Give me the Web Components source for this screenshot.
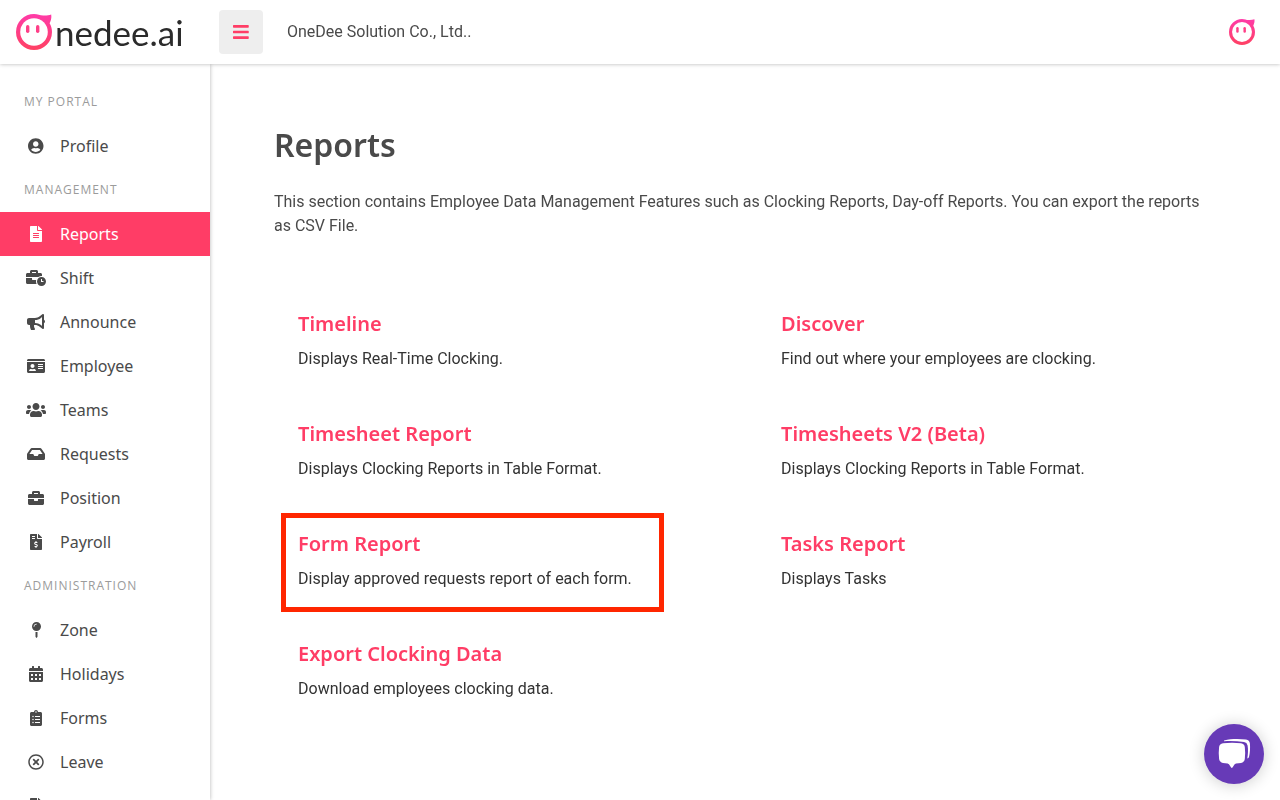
<!DOCTYPE html>
<html lang="en">
<head>
<meta charset="utf-8">
<meta name="viewport" content="width=device-width, initial-scale=1">
<title>Reports - Onedee.ai</title>
<style>
  html, body { margin: 0; height: 100%; background: #fff; }
  body {
    --pink: #ff3d66;
    --ink: #4a4a4a;
    --heading-font: "Noto Sans", "Open Sans", sans-serif;
    font: 16px/24px Roboto, "Liberation Sans", sans-serif;
    color: var(--ink);
  }
</style>
</head>
<body>
<od-app>
  <od-header slot="header" company="OneDee Solution Co., Ltd.."></od-header>
  <od-sidebar slot="sidebar">
    <od-nav-group label="MY PORTAL">
      <od-nav-item icon="user">Profile</od-nav-item>
    </od-nav-group>
    <od-nav-group label="MANAGEMENT">
      <od-nav-item icon="file" active>Reports</od-nav-item>
      <od-nav-item icon="shift">Shift</od-nav-item>
      <od-nav-item icon="bullhorn">Announce</od-nav-item>
      <od-nav-item icon="idcard">Employee</od-nav-item>
      <od-nav-item icon="users">Teams</od-nav-item>
      <od-nav-item icon="inbox">Requests</od-nav-item>
      <od-nav-item icon="briefcase">Position</od-nav-item>
      <od-nav-item icon="invoice">Payroll</od-nav-item>
    </od-nav-group>
    <od-nav-group label="ADMINISTRATION">
      <od-nav-item icon="pin">Zone</od-nav-item>
      <od-nav-item icon="calendar">Holidays</od-nav-item>
      <od-nav-item icon="clipboard">Forms</od-nav-item>
      <od-nav-item icon="cross">Leave</od-nav-item>
      <od-nav-item icon="invoice">Payroll List</od-nav-item>
    </od-nav-group>
  </od-sidebar>
  <od-page heading="Reports">
    <span slot="intro">This section contains Employee Data Management Features such as Clocking Reports, Day-off Reports. You can export the reports as CSV File.</span>
    <od-card heading="Timeline">Displays Real-Time Clocking.</od-card>
    <od-card heading="Discover">Find out where your employees are clocking.</od-card>
    <od-card heading="Timesheet Report">Displays Clocking Reports in Table Format.</od-card>
    <od-card heading="Timesheets V2 (Beta)">Displays Clocking Reports in Table Format.</od-card>
    <od-card heading="Form Report" marked>Display approved requests report of each form.</od-card>
    <od-card heading="Tasks Report">Displays Tasks</od-card>
    <od-card heading="Export Clocking Data">Download employees clocking data.</od-card>
  </od-page>
  <od-chat-button slot="chat"></od-chat-button>
</od-app>

<script>
const ICONS = {
  bars: [448, 'M16 132h416c8.837 0 16-7.163 16-16V76c0-8.837-7.163-16-16-16H16C7.163 60 0 67.163 0 76v40c0 8.837 7.163 16 16 16zm0 160h416c8.837 0 16-7.163 16-16v-40c0-8.837-7.163-16-16-16H16c-8.837 0-16 7.163-16 16v40c0 8.837 7.163 16 16 16zm0 160h416c8.837 0 16-7.163 16-16v-40c0-8.837-7.163-16-16-16H16c-8.837 0-16 7.163-16 16v40c0 8.837 7.163 16 16 16z'],
  user: [496, 'M248 8C111 8 0 119 0 256s111 248 248 248 248-111 248-248S385 8 248 8zm0 96c48.6 0 88 39.4 88 88s-39.4 88-88 88-88-39.4-88-88 39.4-88 88-88zm0 344c-58.7 0-111.3-26.6-146.5-68.2 18.8-35.4 55.6-59.8 98.5-59.8 2.4 0 4.8.4 7.1 1.1 13 4.2 26.6 6.9 40.9 6.9 14.3 0 28-2.7 40.9-6.9 2.3-.7 4.7-1.1 7.1-1.1 42.9 0 79.7 24.4 98.5 59.8C359.3 421.4 306.7 448 248 448z'],
  file: [384, 'M224 136V0H24C10.7 0 0 10.7 0 24v464c0 13.3 10.7 24 24 24h336c13.3 0 24-10.7 24-24V160H248c-13.2 0-24-10.8-24-24zm64 236c0 6.6-5.4 12-12 12H108c-6.6 0-12-5.4-12-12v-8c0-6.6 5.4-12 12-12h168c6.6 0 12 5.4 12 12v8zm0-64c0 6.6-5.4 12-12 12H108c-6.6 0-12-5.4-12-12v-8c0-6.6 5.4-12 12-12h168c6.6 0 12 5.4 12 12v8zm0-72v8c0 6.6-5.4 12-12 12H108c-6.6 0-12-5.4-12-12v-8c0-6.6 5.4-12 12-12h168c6.6 0 12 5.4 12 12zm96-114.1v6.1H256V0h6.1c6.4 0 12.5 2.5 17 7l97.9 98c4.5 4.5 7 10.6 7 16.9z'],
  shift: [640, 'M496 224c-79.59 0-144 64.41-144 144s64.41 144 144 144 144-64.41 144-144-64.41-144-144-144zm64 150.29c0 5.34-4.37 9.71-9.71 9.71h-60.57c-5.34 0-9.71-4.37-9.71-9.71v-76.57c0-5.34 4.37-9.71 9.71-9.71h12.57c5.34 0 9.71 4.37 9.71 9.71V352h38.29c5.34 0 9.71 4.37 9.71 9.71v12.58zM496 192c5.4 0 10.72.33 16 .81V144c0-25.6-22.4-48-48-48h-80V48c0-25.6-22.4-48-48-48H176c-25.6 0-48 22.4-48 48v48H48c-25.6 0-48 22.4-48 48v80h395.12c28.6-20.09 63.35-32 100.88-32zM320 96H192V64h128v32zm6.82 224H208c-8.84 0-16-7.16-16-16v-48H0v144c0 25.6 22.4 48 48 48h291.43C327.1 423.96 320 396.82 320 368c0-16.66 2.48-32.72 6.82-48z'],
  bullhorn: [576, 'M576 240c0-23.63-12.95-44.04-32-55.12V32.01C544 23.26 537.02 0 512 0c-7.12 0-14.19 2.38-19.98 7.02l-85.03 68.03C364.28 109.19 310.66 128 256 128H64c-35.35 0-64 28.65-64 64v96c0 35.35 28.65 64 64 64h33.7c-1.39 10.48-2.18 21.14-2.18 32 0 39.77 9.26 77.35 25.56 110.94 5.19 10.69 16.52 17.06 28.4 17.06h74.28c26.05 0 41.69-29.84 25.9-50.56-16.4-21.52-26.15-48.36-26.15-77.44 0-11.11 1.62-21.79 4.41-32H256c54.66 0 108.28 18.81 150.98 52.95l85.03 68.03a32.023 32.023 0 0 0 19.98 7.02c24.92 0 32-22.78 32-32V295.13C563.05 284.04 576 263.63 576 240zm-96 141.42l-33.05-26.44C392.95 311.78 325.12 288 256 288v-96c69.12 0 136.95-23.78 190.95-66.98L480 98.58v282.84z'],
  idcard: [576, 'M528 32H48C21.5 32 0 53.5 0 80v16h576V80c0-26.5-21.5-48-48-48zM0 432c0 26.5 21.5 48 48 48h480c26.5 0 48-21.5 48-48V128H0v304zm352-232c0-4.4 3.6-8 8-8h144c4.4 0 8 3.6 8 8v16c0 4.4-3.6 8-8 8H360c-4.4 0-8-3.6-8-8v-16zm0 64c0-4.4 3.6-8 8-8h144c4.4 0 8 3.6 8 8v16c0 4.4-3.6 8-8 8H360c-4.4 0-8-3.6-8-8v-16zm0 64c0-4.4 3.6-8 8-8h144c4.4 0 8 3.6 8 8v16c0 4.4-3.6 8-8 8H360c-4.4 0-8-3.6-8-8v-16zM176 192c35.3 0 64 28.7 64 64s-28.7 64-64 64-64-28.7-64-64 28.7-64 64-64zM67.1 396.2C75.5 370.5 99.6 352 128 352h8.2c12.3 5.1 25.7 8 39.8 8s27.6-2.9 39.8-8h8.2c28.4 0 52.5 18.5 60.9 44.2 3.2 9.9-5.2 19.8-15.6 19.8H82.7c-10.4 0-18.8-10-15.6-19.8z'],
  users: [640, 'M96 224c35.3 0 64-28.7 64-64s-28.7-64-64-64-64 28.7-64 64 28.7 64 64 64zm448 0c35.3 0 64-28.7 64-64s-28.7-64-64-64-64 28.7-64 64 28.7 64 64 64zm32 32h-64c-17.6 0-33.5 7.1-45.1 18.6 40.3 22.1 68.9 62 75.1 109.4h66c17.7 0 32-14.3 32-32v-32c0-35.3-28.7-64-64-64zm-256 0c61.9 0 112-50.1 112-112S381.9 32 320 32 208 82.1 208 144s50.1 112 112 112zm76.8 32h-8.3c-20.8 10-43.9 16-68.5 16s-47.6-6-68.5-16h-8.3C179.6 288 128 339.6 128 403.2V432c0 26.5 21.5 48 48 48h288c26.5 0 48-21.5 48-48v-28.8c0-63.6-51.6-115.2-115.2-115.2zm-223.7-13.4C161.5 263.1 145.6 256 128 256H64c-35.3 0-64 28.7-64 64v32c0 17.7 14.3 32 32 32h65.9c6.3-47.4 34.9-87.3 75.2-109.4z'],
  inbox: [576, 'M567.938 243.908L462.25 85.374A48.003 48.003 0 0 0 422.311 64H153.689a48 48 0 0 0-39.938 21.374L8.062 243.908A47.994 47.994 0 0 0 0 270.533V400c0 26.51 21.49 48 48 48h480c26.51 0 48-21.49 48-48V270.533a47.994 47.994 0 0 0-8.062-26.625zM162.252 128h251.497l85.333 128H376l-32 64H232l-32-64H76.918l85.334-128z'],
  briefcase: [512, 'M320 336c0 8.84-7.16 16-16 16h-96c-8.84 0-16-7.16-16-16v-48H0v144c0 25.6 22.4 48 48 48h416c25.6 0 48-22.4 48-48V288H320v48zm144-208h-80V80c0-25.6-22.4-48-48-48H176c-25.6 0-48 22.4-48 48v48H48c-25.6 0-48 22.4-48 48v80h512v-80c0-25.6-22.4-48-48-48zm-144 0H192V96h128v32z'],
  invoice: [384, 'M377 105L279.1 7c-4.5-4.5-10.6-7-17-7H256v128h128v-6.1c0-6.3-2.5-12.4-7-16.9zm-153 31V0H24C10.7 0 0 10.7 0 24v464c0 13.3 10.7 24 24 24h336c13.3 0 24-10.7 24-24V160H248c-13.2 0-24-10.8-24-24zM64 72c0-4.42 3.58-8 8-8h80c4.42 0 8 3.58 8 8v16c0 4.42-3.58 8-8 8H72c-4.42 0-8-3.58-8-8V72zm0 80v-16c0-4.42 3.58-8 8-8h80c4.42 0 8 3.58 8 8v16c0 4.42-3.58 8-8 8H72c-4.42 0-8-3.58-8-8zm144 263.88V440c0 4.42-3.58 8-8 8h-16c-4.42 0-8-3.58-8-8v-24.29c-11.29-.58-22.27-4.52-31.37-11.35-3.9-2.93-4.1-8.77-.57-12.14l11.75-11.21c2.77-2.64 6.89-2.76 10.13-.73 3.87 2.42 8.26 3.72 12.82 3.72h28.11c6.5 0 11.8-5.92 11.8-13.19 0-5.95-3.61-11.19-8.77-12.73l-45-13.5c-18.59-5.58-31.58-23.42-31.58-43.39 0-24.52 19.05-44.44 42.67-45.07V232c0-4.42 3.58-8 8-8h16c4.42 0 8 3.58 8 8v24.29c11.29.58 22.27 4.51 31.37 11.35 3.9 2.93 4.1 8.77.57 12.14l-11.75 11.21c-2.77 2.64-6.89 2.76-10.13.73-3.87-2.43-8.26-3.72-12.82-3.72h-28.11c-6.5 0-11.8 5.92-11.8 13.19 0 5.95 3.61 11.19 8.77 12.73l45 13.5c18.59 5.58 31.58 23.42 31.58 43.39 0 24.53-19.05 44.44-42.67 45.07z'],
  pin: [288, 'M112 316.94v156.69l22.02 33.02c4.75 7.12 15.22 7.12 19.97 0L176 473.63V316.94c-10.39 1.92-21.06 3.06-32 3.06s-21.61-1.14-32-3.06zM144 0C64.47 0 0 64.47 0 144s64.47 144 144 144 144-64.47 144-144S223.53 0 144 0zm0 76c-37.5 0-68 30.5-68 68 0 6.62-5.38 12-12 12s-12-5.38-12-12c0-50.73 41.28-92 92-92 6.62 0 12 5.38 12 12s-5.38 12-12 12z'],
  calendar: [448, 'M0 464c0 26.5 21.5 48 48 48h352c26.5 0 48-21.5 48-48V192H0v272zm320-196c0-6.6 5.4-12 12-12h40c6.6 0 12 5.4 12 12v40c0 6.6-5.4 12-12 12h-40c-6.6 0-12-5.4-12-12v-40zm0 128c0-6.6 5.4-12 12-12h40c6.6 0 12 5.4 12 12v40c0 6.6-5.4 12-12 12h-40c-6.6 0-12-5.4-12-12v-40zM192 268c0-6.6 5.4-12 12-12h40c6.6 0 12 5.4 12 12v40c0 6.6-5.4 12-12 12h-40c-6.6 0-12-5.4-12-12v-40zm0 128c0-6.6 5.4-12 12-12h40c6.6 0 12 5.4 12 12v40c0 6.6-5.4 12-12 12h-40c-6.6 0-12-5.4-12-12v-40zM64 268c0-6.6 5.4-12 12-12h40c6.6 0 12 5.4 12 12v40c0 6.6-5.4 12-12 12H76c-6.6 0-12-5.4-12-12v-40zm0 128c0-6.6 5.4-12 12-12h40c6.6 0 12 5.4 12 12v40c0 6.6-5.4 12-12 12H76c-6.6 0-12-5.4-12-12v-40zM400 64h-48V16c0-8.8-7.2-16-16-16h-32c-8.8 0-16 7.2-16 16v48H160V16c0-8.8-7.2-16-16-16h-32c-8.8 0-16 7.2-16 16v48H48C21.5 64 0 85.5 0 112v48h448v-48c0-26.5-21.5-48-48-48z'],
  clipboard: [384, 'M336 64h-80c0-35.3-28.7-64-64-64s-64 28.7-64 64H48C21.5 64 0 85.5 0 112v352c0 26.5 21.5 48 48 48h288c26.5 0 48-21.5 48-48V112c0-26.5-21.5-48-48-48zM96 424c-13.3 0-24-10.7-24-24s10.7-24 24-24 24 10.7 24 24-10.7 24-24 24zm0-96c-13.3 0-24-10.7-24-24s10.7-24 24-24 24 10.7 24 24-10.7 24-24 24zm0-96c-13.3 0-24-10.7-24-24s10.7-24 24-24 24 10.7 24 24-10.7 24-24 24zm96-192c13.3 0 24 10.7 24 24s-10.7 24-24 24-24-10.7-24-24 10.7-24 24-24zm128 368c0 4.4-3.6 8-8 8H168c-4.4 0-8-3.6-8-8v-16c0-4.4 3.6-8 8-8h144c4.4 0 8 3.6 8 8v16zm0-96c0 4.4-3.6 8-8 8H168c-4.4 0-8-3.6-8-8v-16c0-4.4 3.6-8 8-8h144c4.4 0 8 3.6 8 8v16zm0-96c0 4.4-3.6 8-8 8H168c-4.4 0-8-3.6-8-8v-16c0-4.4 3.6-8 8-8h144c4.4 0 8 3.6 8 8v16z'],
  cross: [512, 'M256 8C119 8 8 119 8 256s111 248 248 248 248-111 248-248S393 8 256 8zm0 448c-110.5 0-200-89.5-200-200S145.5 56 256 56s200 89.5 200 200-89.5 200-200 200zm101.8-262.2L295.6 256l62.2 62.2c4.7 4.7 4.7 12.3 0 17l-22.6 22.6c-4.7 4.7-12.3 4.7-17 0L256 295.6l-62.2 62.2c-4.7 4.7-12.3 4.7-17 0l-22.6-22.6c-4.7-4.7-4.7-12.3 0-17l62.2-62.2-62.2-62.2c-4.7-4.7-4.7-12.3 0-17l22.6-22.6c4.7-4.7 12.3-4.7 17 0l62.2 62.2 62.2-62.2c4.7-4.7 12.3-4.7 17 0l22.6 22.6c4.7 4.7 4.7 12.3 0 17z']
};

class Base extends HTMLElement {
  connectedCallback() {
    if (this.shadowRoot) return;
    this.attachShadow({ mode: 'open' }).innerHTML = this.render();
  }
  attr(name) { return this.getAttribute(name) || ''; }
}

customElements.define('od-icon', class extends Base {
  render() {
    const [width, path] = ICONS[this.attr('name')];
    return `<style>
      :host { display: flex; justify-content: center; align-items: center; }
      svg { display: block; height: var(--icon-size, 16px); fill: currentColor; }
    </style>
    <svg viewBox="0 0 ${width} 512" aria-hidden="true"><path d="${path}"/></svg>`;
  }
});

/* Round face with a small flick of hair at the top right */
customElements.define('od-face', class extends Base {
  render() {
    return `<style>
      :host { display: block; width: var(--face-size, 36px); height: var(--face-size, 36px); }
      svg { display: block; width: 100%; height: 100%; }
    </style>
    <svg viewBox="0 0 36 36" aria-hidden="true">
      <defs><linearGradient id="g" x1="0" y1="0" x2="0" y2="1">
        <stop offset="0" stop-color="#ff3ba8"/><stop offset="1" stop-color="#ff4163"/>
      </linearGradient></defs>
      <path fill="url(#g)" d="M18 0C22 0 24 1.600 27.500 1.500C30.500 1.600 33 1.300 35.200 .5C35.800 4 34.700 7.200 33.600 9.300C35.200 12 36 15 36 18A18 18 0 1 1 18 0Z"/>
      <circle cx="18" cy="18" r="13.800" fill="#fff"/>
      <rect x="10" y="11" width="3.400" height="8" rx="1.700" fill="#ff3f88"/>
      <rect x="20" y="11" width="3.400" height="8" rx="1.700" fill="#ff3f88"/>
    </svg>`;
  }
});

customElements.define('od-header', class extends Base {
  render() {
    return `<style>
      :host {
        display: flex; align-items: center; box-sizing: border-box; height: 64px;
        padding: 0 24px 0 16px; background: #fff; position: relative; z-index: 2;
        box-shadow: 0 0 4px rgba(0, 0, 0, .3);
      }
      .logo {
        display: flex; align-items: center; gap: 3px; width: 203px;
        color: #2b2b2b; text-decoration: none; font: 35px/36px Lato, sans-serif;
      }
      .menu {
        display: grid; place-items: center; width: 44px; height: 44px; padding: 0;
        border: 0; border-radius: 4px; background: #eee; color: var(--pink); cursor: pointer;
        --icon-size: 18px;
      }
      .company { flex: 1; margin-left: 24px; }
      .account { border: 0; background: none; padding: 0 1px; cursor: pointer; --face-size: 26px; }
    </style>
    <a class="logo" href="#" aria-label="Onedee.ai"><od-face></od-face><span>nedee.ai</span></a>
    <button class="menu" aria-label="Toggle menu"><od-icon name="bars"></od-icon></button>
    <span class="company">${this.attr('company')}</span>
    <button class="account" aria-label="Account"><od-face></od-face></button>`;
  }
});

customElements.define('od-sidebar', class extends Base {
  render() {
    return `<style>
      :host {
        display: block; box-sizing: border-box; width: 210px; padding-top: 16px;
        overflow-y: auto; scrollbar-width: none; background: #fff;
        box-shadow: 0 0 4px rgba(0, 0, 0, .3);
      }
    </style>
    <nav aria-label="Main"><slot></slot></nav>`;
  }
});

customElements.define('od-nav-group', class extends Base {
  render() {
    return `<style>
      :host { display: block; }
      .label {
        padding: 0 24px; color: #9b9b9b; letter-spacing: 1px;
        font: 12px/44px "Open Sans", sans-serif;
      }
    </style>
    <div class="label">${this.attr('label')}</div>
    <slot></slot>`;
  }
});

customElements.define('od-nav-item', class extends Base {
  render() {
    return `<style>
      :host { display: block; }
      a {
        display: flex; align-items: center; gap: 12px; height: 44px; padding: 0 24px;
        color: inherit; text-decoration: none; font-family: var(--heading-font);
      }
      od-icon { width: 24px; }
      :host([active]) a { background: var(--pink); color: #fff; }
    </style>
    <a href="#" ${this.hasAttribute('active') ? 'aria-current="page"' : ''}><od-icon name="${this.attr('icon')}"></od-icon><slot></slot></a>`;
  }
});

customElements.define('od-page', class extends Base {
  render() {
    return `<style>
      :host { display: block; padding: 56px 64px; overflow-y: auto; }
      h1 { margin: 0 0 20px; font: 600 32px/50px var(--heading-font); }
      p { margin: 0 0 60px; }
      .grid { display: grid; grid-template-columns: 1fr 1fr; gap: 24px; }
    </style>
    <h1>${this.attr('heading')}</h1>
    <p><slot name="intro"></slot></p>
    <div class="grid"><slot></slot></div>`;
  }
});

customElements.define('od-card', class extends Base {
  render() {
    return `<style>
      :host { display: block; position: relative; padding: 13px 24px; color: #333; }
      h2 { margin: 0 0 10px; font: 600 20px/26px var(--heading-font); }
      a { color: var(--pink); text-decoration: none; }
      p { margin: 0; }
      :host([marked])::after {
        content: ""; position: absolute; inset: -5px 69px -8px 7px;
        border: 5px solid #ff2600; pointer-events: none;
      }
    </style>
    <h2><a href="#">${this.attr('heading')}</a></h2>
    <p><slot></slot></p>`;
  }
});

customElements.define('od-chat-button', class extends Base {
  render() {
    return `<style>
      :host { display: block; }
      button {
        display: grid; place-items: center; width: 60px; height: 60px; padding: 0; border: 0;
        border-radius: 50%; background: #673ab7; cursor: pointer;
        box-shadow: 0 1px 16px rgba(0, 0, 0, .2);
      }
      svg { display: block; width: 60px; height: 60px; fill: #fff; }
    </style>
    <button aria-label="Open chat"><svg viewBox="0 0 60 60" aria-hidden="true">
      <path d="M20 16.500C27 14.600 35 14.600 42 15.500Q45.500 16 45.900 19.500C46.300 24 46 29 45 33Q44.600 34.300 43.300 34.600C44 30 44.300 26 43.600 21.500Q43 18.600 40 18.100C33 17 26 16.800 20 17.300Z"/>
      <path d="M19 19.300C25 18.500 31 18.500 37 19.300Q40.400 19.800 40.800 23C41.300 27 41.300 31 40.800 35Q40.400 38.300 37 38.900L32 39.400Q30.500 39.700 29.800 41.500L28.500 43.600Q27.800 44.500 27.100 43.600L25.800 41.500Q25.200 39.700 23.600 39.400L19 38.900Q15.600 38.300 15.100 35C14.600 31 14.600 27 15.100 23Q15.600 19.800 19 19.300Z"/>
    </svg></button>`;
  }
});

customElements.define('od-app', class extends Base {
  render() {
    return `<style>
      :host {
        display: grid; grid-template: auto minmax(0, 1fr) / auto minmax(0, 1fr);
        height: 100vh; overflow: hidden;
      }
      ::slotted([slot="header"]) { grid-column: 1 / -1; }
      .chat { position: fixed; right: 16px; bottom: 16px; z-index: 3; }
    </style>
    <slot name="header"></slot>
    <slot name="sidebar"></slot>
    <slot></slot>
    <div class="chat"><slot name="chat"></slot></div>`;
  }
});
</script>
</body>
</html>
